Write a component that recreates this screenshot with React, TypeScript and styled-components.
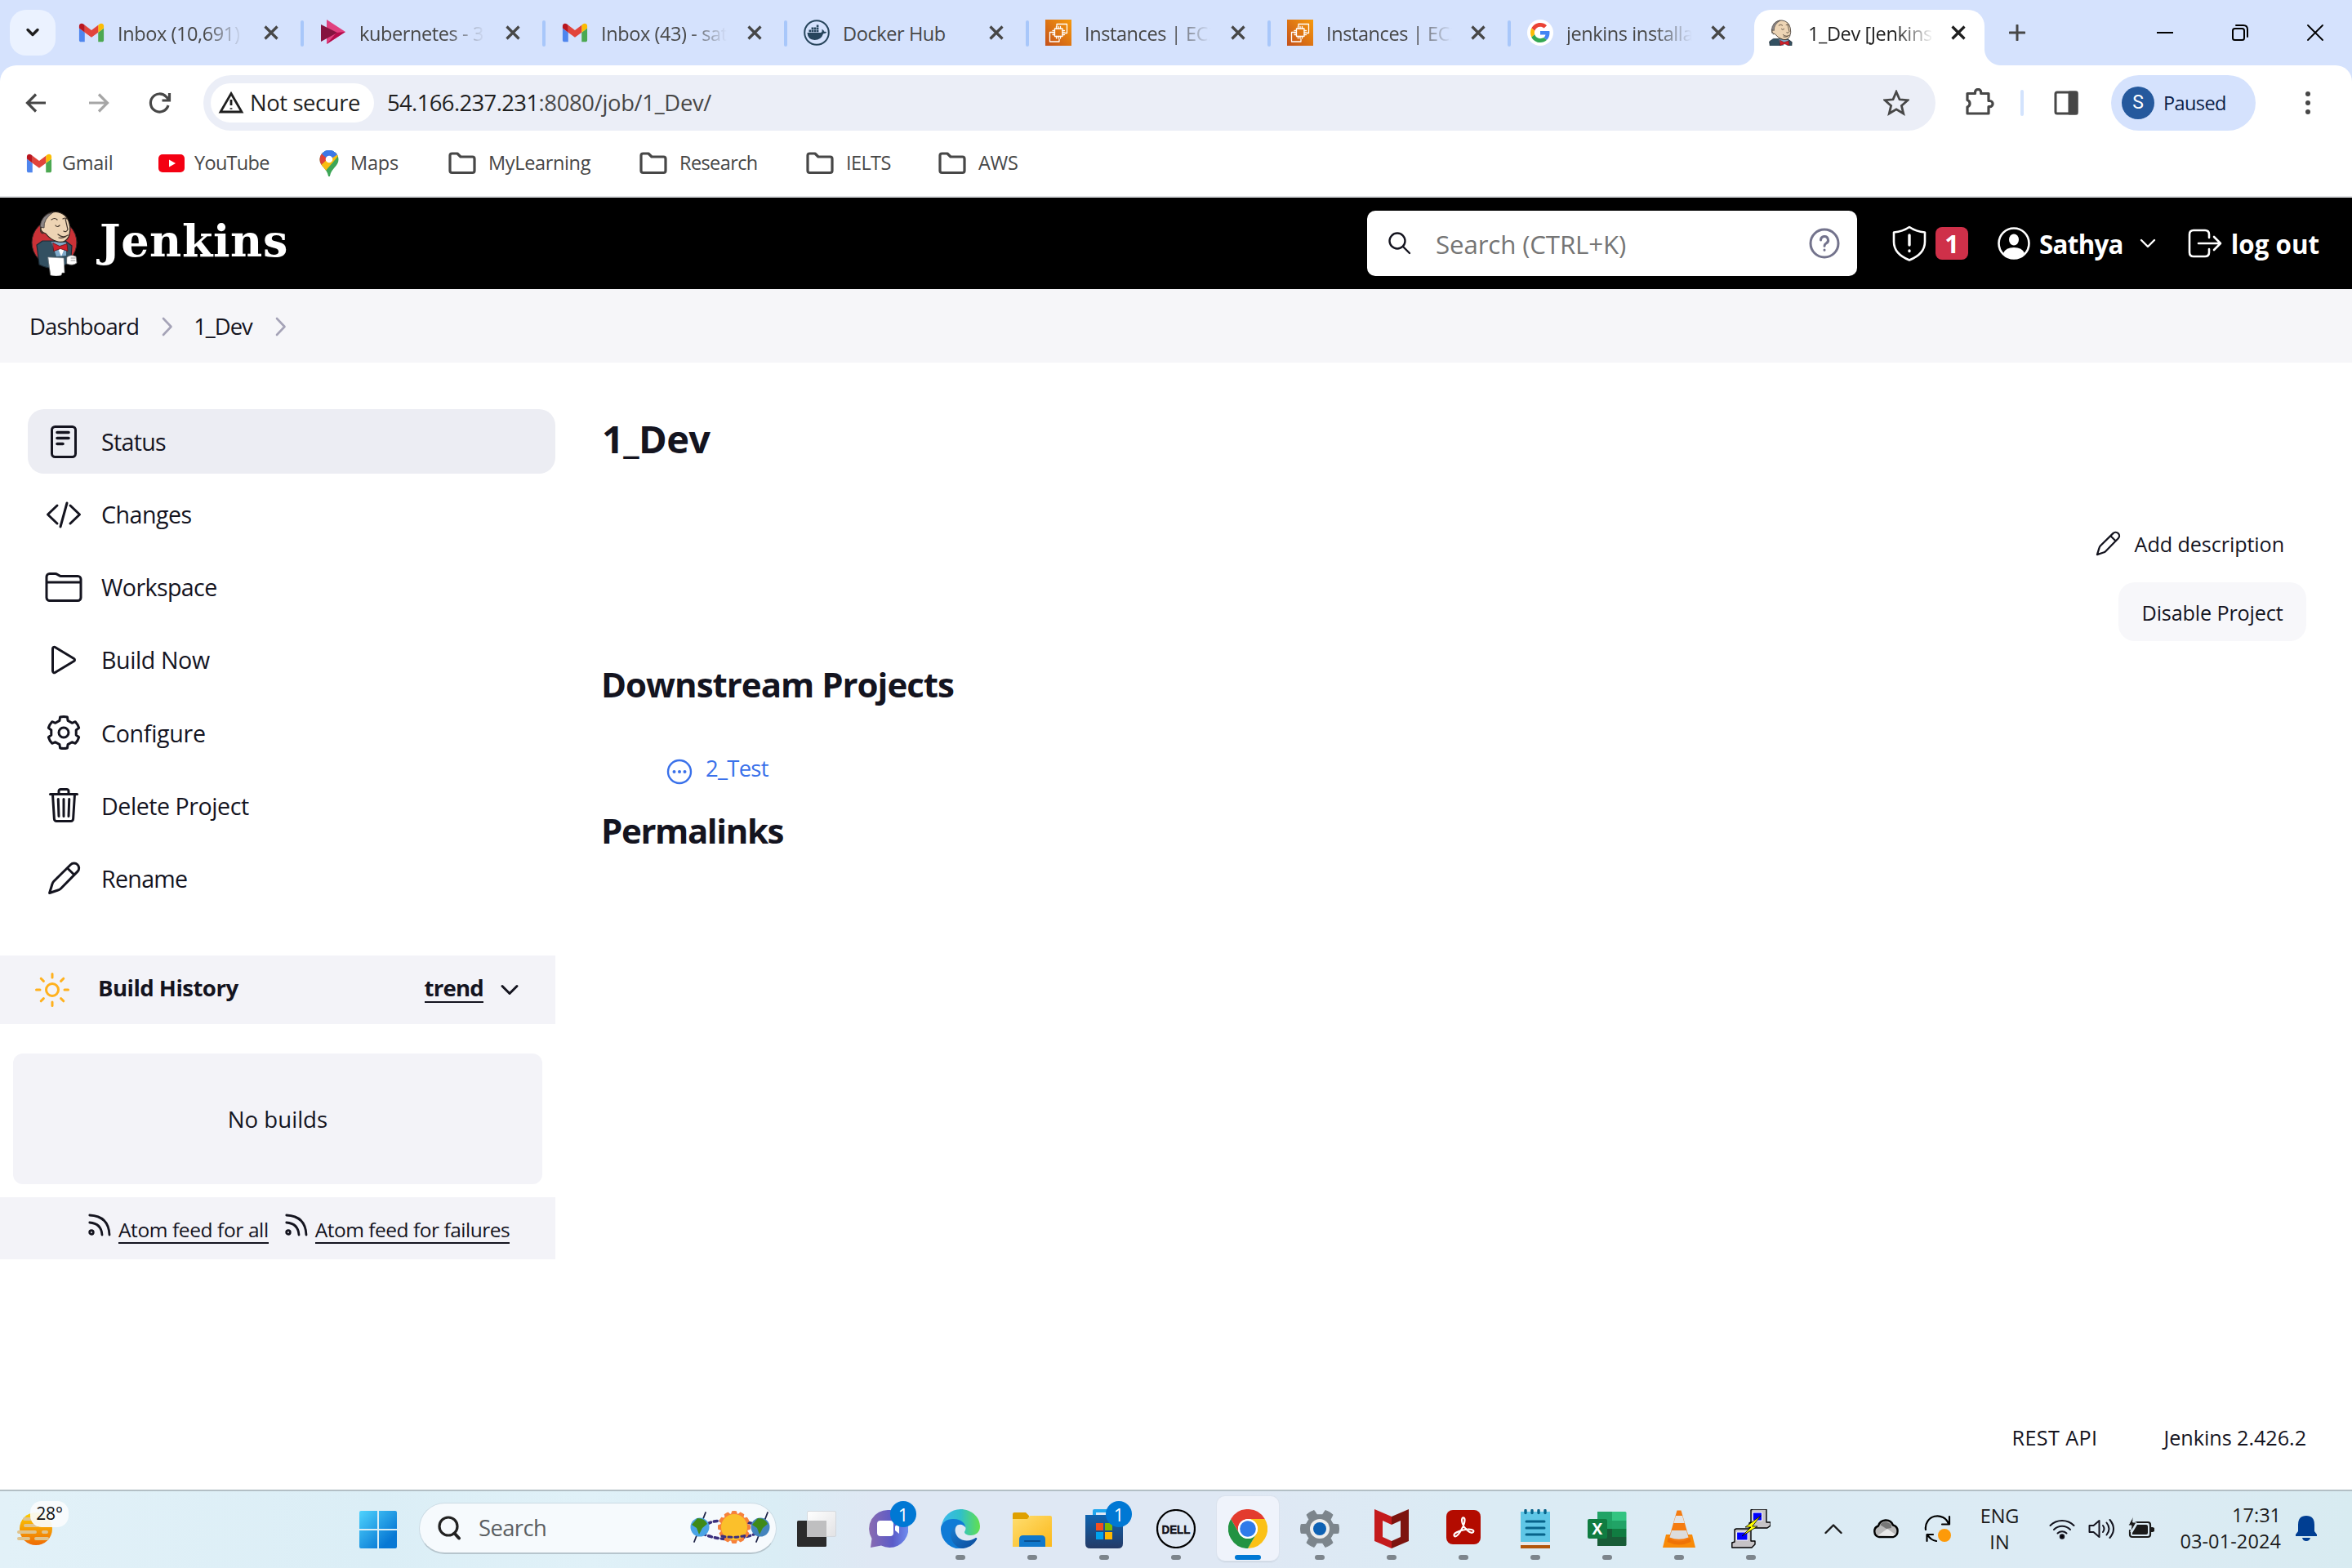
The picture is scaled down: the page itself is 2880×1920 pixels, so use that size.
import React from "react";
import styled, { createGlobalStyle } from "styled-components";
import { IoPlayOutline, IoFolderOutline, IoTrashOutline, IoSunnyOutline, IoChevronDown } from "react-icons/io5";

const Global = createGlobalStyle`
  * { box-sizing: border-box; }
  body { margin: 0; background: #fff; font-family: "Open Sans", "Noto Sans", sans-serif; color: #14141f; }
  svg { display: block; flex: none; }
`;

const T = styled.span<{ $s?: number; $w?: number; $ls?: number; $c?: string; $mt?: number }>`
  display: block;
  flex: none;
  white-space: pre;
  line-height: 1.2;
  font-size: ${p => p.$s ?? 23.5}px;
  font-weight: ${p => p.$w ?? 400};
  letter-spacing: ${p => p.$ls ?? -0.4}px;
  margin-top: ${p => p.$mt ?? 0}px;
  color: ${p => p.$c ?? "inherit"};
`;
const Screen = styled.div`width: 2880px; height: 1920px; display: flex; flex-direction: column; overflow: hidden;`;

/* ---------- browser chrome ---------- */
const TabStrip = styled.div`height: 80px; flex: none; background: #d5e2fd; display: flex; align-items: center; padding-left: 12px; color: #474747;`;
const TabSearch = styled.div`width: 56px; height: 56px; border-radius: 20px; background: #ebf2ff; display: flex; align-items: center; justify-content: center; margin-right: 6px;`;
const TabBox = styled.div<{ $w: number }>`width: ${p => p.$w}px; height: 80px; padding-left: 22px; display: flex; align-items: center; flex: none; position: relative;`;
const TabTitle = styled.div<{ $fade?: boolean; $mr?: number }>`
  width: 162px; margin-left: 16px; margin-right: ${p => p.$mr ?? 16}px; flex: none;
  ${p => p.$fade && "mask-image: linear-gradient(90deg, #000 66%, transparent 95%);"}
`;
const TabEdge = styled.div`width: 4px; height: 32px; border-radius: 2px; background: #a8c7fa; position: absolute; right: -2px; top: 25px;`;
const ActiveTab = styled(TabBox)`
  color: #1f1f1f; z-index: 1;
  &::before { content: ""; position: absolute; z-index: -1; left: 4px; width: 282px; top: 12px; bottom: 0; background: #fff; border-radius: 20px 20px 0 0; }
`;
const Foot = styled.div<{ $left?: boolean }>`
  position: absolute; width: 20px; height: 20px; bottom: 0; ${p => p.$left ? "left: -16px;" : "left: 286px;"}
  background: radial-gradient(circle at ${p => p.$left ? "0 0" : "100% 0"}, transparent 19.5px, #fff 20.5px);
`;
const NewTab = styled.div`margin-left: 20px; width: 20px;`;
const WinButtons = styled.div`display: flex; align-items: center; margin-left: 161px; gap: 72px; color: #000;`;
const ToolbarWrap = styled.div`background: #d5e2fd; flex: none;`;
const Toolbar = styled.div`height: 92px; background: #fff; border-radius: 20px 20px 0 0; display: flex; align-items: center; padding-left: 29px; color: #474747;`;
const NavIcons = styled.div`display: flex; align-items: center; gap: 43.500px; width: 220px; flex: none;`;
const Omnibox = styled.div`width: 2121px; height: 68px; border-radius: 34px; background: #ebeef7; display: flex; align-items: center; padding: 0 32px 0 9px; flex: none;`;
const Chip = styled.div`width: 200px; height: 48px; border-radius: 24px; background: #fff; display: flex; align-items: center; padding-left: 9px; gap: 7px; color: #1f1f1f; margin-right: 16px;`;
const Grow = styled.div`flex: 1;`;
const ToolSep = styled.div`width: 4px; height: 32px; border-radius: 2px; background: #d3e3fd; margin: 0 37px 0 32px;`;
const Profile = styled.div`width: 177px; height: 68px; border-radius: 34px; background: #d5e2fd; display: flex; align-items: center; padding-left: 13px; gap: 11px; margin: 0 60px 0 40px;`;
const Avatar = styled.div`width: 40px; height: 40px; border-radius: 50%; background: #25599d; display: flex; align-items: center; justify-content: center; font-family: Roboto, sans-serif;`;
const Bookmarks = styled.div`height: 70px; flex: none; display: flex; align-items: flex-start; padding: 8px 0 0 32px; color: #474747; border-bottom: 2px solid #dfe1e4;`;
const Bookmark = styled.div<{ $w: number }>`height: 40px; width: ${p => p.$w}px; display: flex; align-items: center; gap: 12px; flex: none;`;

/* ---------- Jenkins ---------- */
const Header = styled.header`height: 112px; background: #000; color: #fff; display: flex; align-items: center; padding-left: 38px; flex: none;`;
const Brand = styled(T)`font-family: "DejaVu Serif", serif; margin-left: 26px; width: 1552px;`;
const SearchBox = styled.div`width: 600px; height: 80px; border-radius: 10px; background: #fff; display: flex; align-items: center; padding: 0 21px 0 26px; flex: none;`;
const HeaderItem = styled.div<{ $ml: number; $gap?: number }>`display: flex; align-items: center; margin-left: ${p => p.$ml}px; gap: ${p => p.$gap ?? 0}px; flex: none;`;
const Alert = styled.div`width: 40px; height: 40px; border-radius: 8px; background: #cf3049; display: flex; align-items: center; justify-content: center;`;
const Crumbs = styled.nav`height: 90px; background: #f6f6f9; display: flex; align-items: center; padding: 2px 0 0 36px; flex: none;`;
const CrumbSep = styled.div`color: #a5a3b7; margin: 0 25px 0 28px;`;
const Body = styled.div`height: 1380px; flex: none; display: flex;`;
const Side = styled.aside`width: 680px; flex: none; padding-top: 57px;`;
const Task = styled.div<{ $on?: boolean }>`
  height: 79px; margin: 0 0 10.200px 34px; border-radius: 20px; padding-left: 20px; display: flex; align-items: center; gap: 22px;
  background: ${p => p.$on ? "#ecedf3" : "transparent"};
`;
const HistoryHead = styled.div`height: 84px; margin-top: 55px; background: #f3f3f8; display: flex; align-items: center; padding: 0 40px 0 40px;`;
const Underlined = styled(T)`border-bottom: 2px solid #14141f;`;
const NoBuilds = styled.div`height: 160px; margin: 36px 16px 16px; border-radius: 12px; background: #f3f3f8; display: flex; align-items: center; justify-content: center;`;
const Feeds = styled.div`height: 76px; background: #f3f3f8; display: flex; align-items: center; padding-left: 108px;`;
const FeedLink = styled.div<{ $mr: number }>`display: flex; align-items: flex-start; height: 36px; gap: 9px; margin-right: ${p => p.$mr}px;`;
const Main = styled.main`flex: 1; padding: 65px 56px 0 56px; display: flex; flex-direction: column; align-items: stretch;`;
const Actions = styled.div`display: flex; flex-direction: column; align-items: flex-end; height: 169px; margin-top: 79px;`;
const AddDesc = styled.div`display: flex; align-items: center; gap: 15px; height: 44px; margin: 0 27px 25px 0;`;
const Button = styled.div`width: 230px; height: 72px; border-radius: 20px; background: #f7f7fa; display: flex; align-items: center; justify-content: center; flex: none;`;
const Downstream = styled.div`display: flex; align-items: center; gap: 16px; padding-left: 80px; color: #3a71ea; height: 40px; margin: 61px 0 27px;`;
const PageFoot = styled.footer`margin-top: auto; height: 79px; display: flex; justify-content: flex-end; gap: 81px;`;

/* ---------- taskbar ---------- */
const Taskbar = styled.div`
  height: 96px; flex: none; border-top: 2px solid #b3bfc5; display: flex; align-items: flex-start;
  background: linear-gradient(90deg, #e2f1f8 0%, #dbeef6 16%, #e0f1f8 25%, #daedf5 33%, #dfe8f4 37%, #dfe8f4 53%, #dbebf4 62%, #dcebf4 90%, #d8ebf1 100%);
`;
const Weather = styled.div`width: 440px; padding: 26px 0 0 20px; position: relative; flex: none;`;
const Temp = styled.div`position: absolute; left: 37px; top: 12px; width: 47px; height: 32px; border-radius: 14px; background: rgba(250,252,253,.92); display: flex; align-items: center; justify-content: center;`;
const Start = styled.div`width: 46px; padding-top: 24px; margin-right: 27px; flex: none;`;
const TaskSearch = styled.div`width: 438px; height: 63px; margin-top: 14px; border-radius: 32px; background: #f6fafd; border: 1px solid #cbdbe4; border-bottom: 2px solid #b6c5cd; display: flex; align-items: center; padding: 0 6px 0 21px; flex: none; margin-right: 5px;`;
const AppSlot = styled.div<{ $on?: boolean }>`
  width: 76px; height: 79px; margin: 6px 6px 0; padding-top: 16px; border-radius: 10px; display: flex; flex-direction: column; align-items: center; gap: 8px; position: relative; flex: none;
  ${p => p.$on && "background: #eff3fb; box-shadow: 0 0 0 1px #dbe3ee, 0 2px 1px #c8d2de;"}
`;
const Dot = styled.div<{ $on?: boolean; $none?: boolean }>`width: ${p => p.$on ? 32 : 12}px; height: 6px; border-radius: 3px; background: ${p => p.$none ? "transparent" : p.$on ? "#0078d4" : "#7d858c"};`;
const Count = styled.div`position: absolute; left: 40px; top: 6px; width: 32px; height: 32px; border-radius: 50%; background: #0078d4; display: flex; align-items: center; justify-content: center;`;
const Tray = styled.div`display: flex; align-items: center; height: 92px; padding-left: 25px;`;
const TrayCell = styled.div<{ $w: number }>`width: ${p => p.$w}px; display: flex; flex-direction: column; align-items: center; flex: none; gap: 4px;`;
const Status = styled.div`display: flex; gap: 16px; margin-left: 17px; align-items: center;`;
const Clock = styled.div`width: 154px; display: flex; flex-direction: column; align-items: flex-end; gap: 4px; margin: -2px 18px 0 0;`;

/* ---------- icons ---------- */
const S = ({ w, h = w, vb, sw, children }: { w: number; h?: number; vb?: string; sw?: number; children: React.ReactNode }) => (
  <svg width={w} height={h} viewBox={vb ?? `0 0 ${w} ${h}`} fill={sw ? "none" : "currentColor"} stroke={sw ? "currentColor" : "none"} strokeWidth={sw} strokeLinecap="round" strokeLinejoin="round">{children}</svg>
);
/* outline of a cog with n teeth: R and r are the outer and inner radii, a and b the half angles of a tooth */
const gear = (n: number, c: number, R: number, r: number, a: number, b: number, off = -90) => {
  const p = (rad: number, deg: number) => `${(c + rad * Math.cos(deg * Math.PI / 180)).toFixed(2)} ${(c + rad * Math.sin(deg * Math.PI / 180)).toFixed(2)}`;
  let d = "";
  for (let i = 0; i < n; i++) {
    const t = off + i * 360 / n;
    d += `${i ? "L" : "M"}${p(r, t - b)} L${p(R, t - a)} A${R} ${R} 0 0 1 ${p(R, t + a)} L${p(r, t + b)} `;
  }
  return d + "Z";
};
const Close = () => <S w={20} vb="-2 -2 20 20"><path d="M.5 .5l15 15M15.500 .5l-15 15" stroke="currentColor" strokeWidth="3.200" strokeLinecap="butt" fill="none" /></S>;
const Gmail = () => (
  <S w={32} h={24} vb="50 40 92 70">
    <path fill="#4f86ee" d="M58 108h14V74L52 59v43c0 3.320 2.690 6 6 6" /><path fill="#4ca851" d="M120 108h14c3.320 0 6-2.690 6-6V59l-20 15" />
    <path fill="#fbbc04" d="M120 48v26l20-15v-8c0-7.420-8.470-11.650-14.400-7.200" /><path fill="#e2443b" d="M72 74V48l24 18 24-18v26L96 92" />
    <path fill="#b9161f" d="M52 51v8l20 15V48l-5.600-4.200c-5.940-4.450-14.400-.22-14.400 7.200" />
  </S>
);
const Kube = () => <S w={32}><path d="M8 0L31 15 8 30z" fill="#e0407f" /><path d="M1 6L21 16 1 27z" fill="#85143f" /><path d="M8 30L31 15 20 16z" fill="#b40d4c" /></S>;
const Docker = () => (
  <S w={32}>
    <circle cx="16" cy="16" r="14.800" fill="none" stroke="#27455c" strokeWidth="2" />
    <g fill="#27455c">
      <path d="M4.500 16H21q2.300-1 1.300-4.300 2.700 1 3 3.100 1.800-.4 3 .5-1.200 2-4.200 2Q21.500 25 13.500 25 5 24.500 4.500 16z" />
      <path d="M6.500 12.500h2.600v2.700H6.500zM9.600 12.500h2.600v2.700H9.600zM12.700 12.500h2.600v2.700h-2.600zM15.800 12.500h2.600v2.700h-2.600zM9.600 9.500h2.600v2.600H9.600zM12.700 9.500h2.600v2.600h-2.600zM15.800 9.500h2.600v2.600h-2.600zM15.800 6.500h2.600v2.600h-2.600z" />
    </g>
  </S>
);
const Ec2 = () => (
  <S w={32}>
    <defs><linearGradient id="ec2" x1="0" y1="1" x2="1" y2="0"><stop offset="0" stopColor="#c4511b" /><stop offset="1" stopColor="#f79a0c" /></linearGradient></defs>
    <rect width="32" height="32" fill="url(#ec2)" />
    <g fill="none" stroke="#fff" strokeWidth="1.300">
      <rect x="11.500" y="11" width="9.500" height="9.500" /><path d="M13.500 8.500v2.500M16 8.500v2.500M18.500 8.500v2.500M13.500 20.500v2.500M16 20.500v2.500M18.500 20.500v2.500M9 13.500h2.500M9 16h2.500M9 18.500h2.500M21 13.500h2.500M21 16h2.500M21 18.500h2.500" />
      <path d="M14 8V5.500h12.500v11h-2.500M10 15.500H5.500v11.500h11.500v-3" />
    </g>
  </S>
);
const Google = () => (
  <S w={32}><circle cx="16" cy="16" r="16" fill="#fff" />
    <g transform="translate(4 4) scale(.5)">
      <path fill="#EA4335" d="M24 9.500c3.540 0 6.710 1.220 9.210 3.600l6.850-6.850C35.900 2.380 30.470 0 24 0 14.620 0 6.510 5.380 2.560 13.220l7.980 6.190C12.430 13.720 17.740 9.500 24 9.500z" />
      <path fill="#4285F4" d="M46.980 24.550c0-1.570-.15-3.090-.38-4.550H24v9.020h12.940c-.58 2.960-2.260 5.480-4.780 7.180l7.730 6c4.510-4.180 7.090-10.360 7.090-17.650z" />
      <path fill="#FBBC05" d="M10.530 28.590c-.48-1.450-.76-2.990-.76-4.590s.27-3.140.76-4.590l-7.980-6.190C.92 16.460 0 20.120 0 24c0 3.880.92 7.540 2.560 10.780l7.970-6.190z" />
      <path fill="#34A853" d="M24 48c6.480 0 11.930-2.130 15.890-5.810l-7.730-6c-2.150 1.450-4.920 2.300-8.160 2.300-6.260 0-11.570-4.220-13.470-9.910l-7.980 6.190C6.510 42.620 14.620 48 24 48z" />
    </g>
  </S>
);
const Butler = ({ w, h, vb, red }: { w: number; h: number; vb: string; red?: boolean }) => (
  <S w={w} h={h} vb={vb}>
    {red && <ellipse cx="28.500" cy="39" rx="27.500" ry="28" fill="#cb3237" stroke="#3a2525" strokeWidth="1" />}
    <path d="M14 37L7 42 10 66Q22 72 34 70L46 64 49 57 50 43 42 37z" fill="#335061" stroke="#1c2a35" strokeWidth="1.200" />
    <path d="M25 38L31 56 43 55 43 39z" fill="#7fa9c9" /><path d="M32 44l5 12 5-12z" fill="#fff" />
    <path d="M16 8Q21 1 31 1.500 44 3 47 16 49 24 46 32 42 40 33 38 24 36 18 28 11 26 12 20z" fill="#edd4b4" stroke="#2b231d" strokeWidth="1.200" />
    <path d="M27 2Q12 5 11 20l5 1Q15 10 27 2z" fill="#8a8585" stroke="#3a3434" strokeWidth=".8" />
    <path d="M12 20q-2 7 3 8M25 11q4-3 7 0M39 10q3-2 5 0M30 18q2 3 5 0M42 10l3 13q-2 4-5 2M33 29q6 5 12 1M34 33q4 1 8-1" fill="none" stroke="#40342a" strokeWidth="1.200" />
    <path d="M27 39.500l8 4 9-3 1 9-9-3-8 3z" fill="#d0202b" stroke="#5e1014" strokeWidth=".8" />
    <path d="M21 57l19 1 1 18-3 0-1 3q-6 2-13 0z" fill="#fff" stroke="#999" strokeWidth=".6" />
    <path d="M44 57q4-4 11-1l1 8q-5 4-12 1z" fill="#fff" stroke="#777" strokeWidth=".8" /><path d="M49 58l5 0M49 61l5 0" stroke="#777" strokeWidth=".8" />
  </S>
);
const YouTube = () => <S w={32} h={22}><rect width="32" height="22" rx="5" fill="#f40012" /><path d="M13 6.500v9l8-4.500z" fill="#fff" /></S>;
const MapsPin = () => (
  <S w={26} h={32} vb="0 0 26 32">
    <defs><clipPath id="pin"><path d="M12 0a11.500 11.500 0 0 1 11.500 11.500c0 8-8.500 10-10.500 20a1 1 0 0 1-2 0C9 21.500 .5 19.500 .5 11.500A11.500 11.500 0 0 1 12 0z" /></clipPath></defs>
    <g clipPath="url(#pin)"><path d="M0 0h24v32H0z" fill="#3da657" /><path d="M0 0h24v6L12 12 4 6z" fill="#3c78e6" /><path d="M0 0l3 4 9 8-8 8-4-2z" fill="#dd4238" /><path d="M1 19L20 2l4 4-17 20z" fill="#f8bd10" /><path d="M6 0h18v4L12 12 3.500 5z" fill="#3c78e6" /><circle cx="12" cy="11" r="4.300" fill="#fff" /></g>
  </S>
);
const Folder = () => <S w={37} h={28} sw={3.2}><path d="M2 4.500Q2 2 4.500 2H11l4 4h14.500Q32 6 32 8.500V23q0 2.500-2.500 2.500h-25Q2 25.500 2 23z" /></S>;
const Pencil = ({ s }: { s: number }) => <S w={s} vb="0 0 48 48" sw={3}><path d="M6.600 41.500L10 30.500Q10.500 28.500 12 27L32.500 6.800a5.700 5.700 0 0 1 8.500 8.300L20.500 36Q19 37.500 17 38zM28.500 11l8.500 8.300" /></S>;
const Rss = () => <S w={28} h={28} sw={2.8}><path d="M1.800 2Q25 3 26 26M1.800 11Q16 12 17 26" /><circle cx="4" cy="23" r="2.300" /></S>;
const Chevron = () => <S w={14} h={24} sw={2.6}><path d="M2 2l9.500 10L2 22" /></S>;

const Teams = () => <S w={48}><defs><linearGradient id="tm" x1="0" x2="1"><stop offset="0" stopColor="#8a6bb0" /><stop offset=".6" stopColor="#5b5bc8" /><stop offset="1" stopColor="#6f8df0" /></linearGradient></defs>
  <path d="M24 1a23 23 0 1 1-9 43.500L2 47 3.500 36A23 23 0 0 1 24 1z" fill="url(#tm)" /><rect x="10" y="14" width="20" height="19" rx="4" fill="#fff" /><path d="M32 21l5-4v13l-5-4z" fill="#fff" /></S>;
const Edge = () => <S w={48}><defs><linearGradient id="e1" x1="0" y1=".4" x2="1" y2=".4"><stop offset="0" stopColor="#3cb9ee" /><stop offset=".5" stopColor="#30c0c8" /><stop offset="1" stopColor="#62e04e" /></linearGradient><linearGradient id="e2" x1="0" y1="0" x2="1" y2="1"><stop offset="0" stopColor="#1a7fd2" /><stop offset="1" stopColor="#0c4a9a" /></linearGradient></defs>
  <path d="M1 20A23.500 23.500 0 0 1 24 0c14 0 24 10 24 21 0 7-5 11-11 11-5 0-8-2-8-4 0-1 1.500-2 1.500-5 0-3-4-9-12-10C10 12 2 16 1 20z" fill="url(#e1)" />
  <path d="M0 24C0 16 8 11.500 16 12c9 .5 14 5 14.500 11-2-4-8-6-12-2-6 7-1 22 11 27A24 24 0 0 1 0 24z" fill="#0f7bd6" />
  <path d="M20 19.500c-5 5-2 15 6 18 7 2.500 13 0 16-2 1.500-1 3 0 2 1.500C40 44 33 48 26 48 14 46 10 32 13 26c2-4 5-6 7-6.500z" fill="url(#e2)" /></S>;
const Explorer = () => <S w={48}><defs><linearGradient id="fx" x1="0" y1="0" x2="1" y2="1"><stop offset="0" stopColor="#ffde70" /><stop offset="1" stopColor="#fbb81a" /></linearGradient></defs>
  <path d="M0 6q0-2 2-2h14l4 4v6H0z" fill="#dfa000" /><path d="M0 12l18 0 3-4h25q2 0 2 2v36H0z" fill="url(#fx)" /><path d="M8 46V37q0-5 5-5h22q5 0 5 5v9z" fill="#0f78cc" /><path d="M15 39h18" stroke="#064f92" strokeWidth="2.200" /></S>;
const Store = () => <S w={48}><defs><linearGradient id="st" x1="0" y1="0" x2="0" y2="1"><stop offset="0" stopColor="#0f64b0" /><stop offset="1" stopColor="#243a66" /></linearGradient></defs>
  <path d="M12 11V2h24v9" fill="none" stroke="#1fa6ee" strokeWidth="4" /><path d="M1 7h46v35q0 6-6 6H7q-6 0-6-6z" fill="url(#st)" />
  <path d="M14 17h9v9h-9z" fill="#f2501f" /><path d="M25 17h9v9h-9z" fill="#7fb900" /><path d="M14 28h9v9h-9z" fill="#00a3ee" /><path d="M25 28h9v9h-9z" fill="#feb800" /></S>;
const Dell = () => <S w={48}><circle cx="24" cy="24" r="23" fill="none" stroke="#000" strokeWidth="2.200" /><text x="6.500" y="29.500" fontFamily="Liberation Sans, sans-serif" fontWeight="700" fontSize="14.500" textLength="35" lengthAdjust="spacingAndGlyphs" stroke="#000" strokeWidth=".4">DELL</text></S>;
const Chrome = () => <S w={48}><path d="M3.200 12A24 24 0 0 1 44.800 12L24 12A12 12 0 0 0 13.600 30z" fill="#e33b2e" /><path d="M44.800 12A24 24 0 0 1 24 48L34.400 30A12 12 0 0 0 24 12z" fill="#fbc116" /><path d="M24 48A24 24 0 0 1 3.200 12L13.600 30A12 12 0 0 0 34.400 30z" fill="#229342" /><circle cx="24" cy="24" r="12" fill="#fff" /><circle cx="24" cy="24" r="9.800" fill="#2f7bea" /></S>;
const SettingsApp = () => <S w={48}><path d={gear(6, 24, 23.5, 17.5, 13, 19, 0)} fill="#7c858c" stroke="#7c858c" strokeLinejoin="round" /><circle cx="24" cy="24" r="12" fill="#eee" /><circle cx="24" cy="24" r="8" fill="#0f62b4" /></S>;
const McAfee = () => <S w={48}><path d="M3 0l21 9v10l-11-5v20l11 5v9L3 39z" fill="#c41a1c" /><path d="M45 0L24 9v10l11-5v20l-11 5v9l21-9z" fill="#7d140f" /></S>;
const Acrobat = () => <S w={48}><rect x="3" y="1" width="42" height="42" rx="8" fill="#b30b00" /><path d="M13 33c-3-3 6-7 13-8 6-1 12 0 10 3-3 3-13-5-14-14 0-5 4-5 3.500 0C25 21 16 36 13 33z" fill="none" stroke="#fff" strokeWidth="2.200" /></S>;
const Notepad = () => <S w={48}><path d="M6 3h36v37H6z" fill="#5fc6e6" /><path d="M6 40h36v4H6z" fill="#e8e8e8" /><path d="M6 44h36v4H6z" fill="#b2570c" /><path d="M13 15h22M13 23h22M13 31h22" stroke="#07638a" strokeWidth="3" strokeLinecap="round" /><path d="M12 1.500v3M20 1.500v3M28 1.500v3M36 1.500v3" stroke="#07638a" strokeWidth="3.400" strokeLinecap="round" /></S>;
const Excel = () => <S w={48}><path d="M12 3h18v11H12z" fill="#21a366" /><path d="M30 3h16q1.500 0 1.500 1.500V14H30z" fill="#33c481" /><path d="M12 14h18v10H12z" fill="#1fa062" /><path d="M30 14h17.500v10H30z" fill="#21a366" /><path d="M12 24h18v10H12z" fill="#185c37" /><path d="M30 24h17.500v10H30z" fill="#107c41" /><path d="M12 34h35.500v9.500q0 1.500-1.500 1.500H12z" fill="#185c37" /><rect x="0" y="12" width="24" height="24" rx="2" fill="#107c41" /><text x="5.500" y="31" fontFamily="Open Sans, sans-serif" fontWeight="700" fontSize="19" fill="#fff">X</text></S>;
const Vlc = () => <S w={48}><path d="M8 31h32l4 16H4z" fill="#f88a08" /><path d="M21.500 1.500h5L37 38q-13 6-26 0z" fill="#f57c10" /><path d="M20 8h8l2.700 9H17.300z" fill="#e4e4e4" /><path d="M15 26h18l2.500 8.500q-12 4.500-23 0z" fill="#dcdcdc" /><path d="M10.500 35Q24 44 37.500 35l1 5Q24 47 9.500 40z" fill="#ee7206" /></S>;
const Putty = () => <S w={48}><g fill="#c6c3c6" stroke="#000" strokeWidth="1.400"><path d="M24 1l2-1h17v16l5 0v4l-4 3H22v-6l2-1z" /><path d="M4 25l2-1h18v15l5 0v4l-4 4H.8v-6l3.200-1z" /></g><path d="M26.500 4h11v10h-11zM7 28h13v10H7z" fill="#00f" stroke="#fff" /><path d="M36 8L17 22h7L13 33l19-12h-6z" fill="#ff0" stroke="#000" strokeWidth=".8" /></S>;
const TaskView = () => <S w={48}><defs><linearGradient id="tv" x1="0" y1="0" x2="1" y2="1"><stop offset="0" stopColor="#fff" /><stop offset="1" stopColor="#e2e2e4" /></linearGradient></defs><rect y="14" width="36" height="32" rx="1.500" fill="#2b2b2b" /><rect x="12.500" y="2.500" width="35" height="31" rx="1.500" fill="url(#tv)" stroke="#cfd3d8" strokeWidth=".8" /><path d="M12 14h24v20H12z" fill="#bfbfc0" /></S>;

const apps: { i: React.ReactNode; n?: boolean; on?: boolean; none?: boolean }[] = [
  { i: <TaskView />, none: true }, { i: <Teams />, n: true, none: true }, { i: <Edge /> }, { i: <Explorer /> }, { i: <Store />, n: true }, { i: <Dell /> }, { i: <Chrome />, on: true },
  { i: <SettingsApp /> }, { i: <McAfee /> }, { i: <Acrobat /> }, { i: <Notepad /> }, { i: <Excel /> }, { i: <Vlc /> }, { i: <Putty /> },
];
const tabs: [React.ReactNode, string, number, boolean][] = [
  [<Gmail />, "Inbox (10,691)", 296, true], [<Kube />, "kubernetes - 3", 296, true], [<Gmail />, "Inbox (43) - sat", 296, true], [<Docker />, "Docker Hub", 296, false],
  [<Ec2 />, "Instances | EC2", 296, true], [<Ec2 />, "Instances | EC2", 294, true], [<Google />, "jenkins installa", 296, true],
];
const bookmarks: [React.ReactNode, string, number, number][] = [
  [<Gmail />, "Gmail", 162, -0.3], [<YouTube />, "YouTube", 197, -0.7], [<MapsPin />, "Maps", 158, -0.2], [<Folder />, "MyLearning", 234, -0.35], [<Folder />, "Research", 204, -0.6], [<Folder />, "IELTS", 162, -0.6], [<Folder />, "AWS", 120, -0.3],
];
const tasks: [React.ReactNode, string, number][] = [
  [<S w={48} sw={3}><rect x="9.500" y="5.500" width="29" height="37" rx="4" /><path d="M16 12.500h14M16 19.500h14M16 26.500h7" strokeWidth="3.600" /></S>, "Status", -0.7],
  [<S w={48} sw={3}><path d="M16 13L4.500 24 16 35M32 13l11.500 11L32 35M28 10l-8 29" /></S>, "Changes", -0.5],
  [<IoFolderOutline size={48} />, "Workspace", -0.6], [<IoPlayOutline size={48} />, "Build Now", -0.4],
  [<S w={48} sw={3}><path d={gear(6, 24, 19.5, 15.5, 13, 19)} /><circle cx="24" cy="24" r="6" /></S>, "Configure", -0.3],
  [<IoTrashOutline size={48} />, "Delete Project", -0.45], [<Pencil s={48} />, "Rename", -0.7],
];

export default function App() {
  return (
    <Screen>
      <Global />
      <TabStrip>
        <TabSearch><S w={18} h={12} sw={3.4}><path d="M3 2.500l6 6 6-6" stroke="#1f1f1f" /></S></TabSearch>
        {tabs.map(([ic, t, w, fade], i) => <TabBox key={i} $w={w}>{ic}<TabTitle $fade={fade} $mr={i > 4 ? 14 : 16}><T $mt={2}>{t}</T></TabTitle><Close />{i < 6 && <TabEdge />}</TabBox>)}
        <ActiveTab $w={296}><Foot $left /><Foot /><Butler w={32} h={32} vb="6 0 50 50" /><TabTitle $fade $mr={12}><T $mt={2}>1_Dev [Jenkins</T></TabTitle><Close /></ActiveTab>
        <NewTab><S w={20} sw={3}><path d="M10 1v18M1 10h18" /></S></NewTab>
        <WinButtons>
          <S w={20}><path d="M0 9h20v2H0z" /></S>
          <S w={20} sw={2}><rect x="1" y="5" width="14" height="14" rx="2.500" /><path d="M5 1h9q5 0 5 5v9" /></S>
          <S w={20} sw={1.8}><path d="M1 1l18 18M19 1L1 19" /></S>
        </WinButtons>
      </TabStrip>
      <ToolbarWrap>
        <Toolbar>
          <NavIcons>
            <S w={32} sw={3.2}><path d="M27 16H5M15 5.500L4.500 16 15 26.500" strokeLinecap="butt" strokeLinejoin="miter" /></S>
            <S w={32} sw={3.2}><path d="M4 16h22M16 5.500L26.500 16 16 26.500" stroke="#a6a6a6" strokeLinecap="butt" strokeLinejoin="miter" /></S>
            <S w={32} sw={3.2}><path d="M26 19a11 11 0 1 1-2.500-10.500L27 12M27.500 4v9h-9" strokeLinecap="butt" strokeLinejoin="miter" /></S>
          </NavIcons>
          <Omnibox>
            <Chip><S w={32} sw={2.8}><path d="M16 4.500L29 27H3z" strokeLinejoin="miter" /><path d="M16 12v7M16 22.200v1.500" strokeLinecap="butt" /></S><T $s={27.4}>Not secure</T></Chip>
            <T $s={27.4} $c="#1f1f1f" $ls={-0.6}>54.166.237.231</T><T $s={27.4} $ls={-0.32}>:8080/job/1_Dev/</T>
            <Grow />
            <S w={32} sw={2.8}><path d="M16 2.500l4 9.300 10 .9-7.600 6.700L24.700 29 16 23.800 7.300 29l2.300-9.600L2 12.700l10-.9z" strokeLinejoin="miter" /></S>
          </Omnibox>
          <HeaderItem $ml={36}>
            <S w={36} sw={3.2}><path d="M3 8.500h9.500V7a3.600 3.600 0 0 1 7.200 0v1.500H29v9h1.500a3.600 3.600 0 0 1 0 7.200H29V33H3v-8a4.500 4.500 0 0 0 0-8.500z" transform="translate(0 -2)" /></S>
            <ToolSep />
            <S w={30} sw={3}><rect x="2" y="2" width="26" height="26" rx="2" /><path d="M19 2h9v26h-9z" fill="currentColor" /></S>
            <Profile><Avatar><T $s={23} $c="#fff">S</T></Avatar><T $c="#0a1d48" $ls={-0.6}>Paused</T></Profile>
            <S w={8} h={28}><circle cx="4" cy="3" r="3" /><circle cx="4" cy="14" r="3" /><circle cx="4" cy="25" r="3" /></S>
          </HeaderItem>
        </Toolbar>
      </ToolbarWrap>
      <Bookmarks>{bookmarks.map(([ic, t, w, ls]) => <Bookmark key={t} $w={w}>{ic}<T $ls={ls} $mt={-1}>{t}</T></Bookmark>)}</Bookmarks>

      <Header>
        <Butler w={58} h={80} vb="0 0 58 80" red />
        <Brand $s={54} $w={700} $ls={0.6} $mt={-6}>Jenkins</Brand>
        <SearchBox>
          <S w={28} sw={2.4}><circle cx="11" cy="11" r="9.500" stroke="#14141f" /><path d="M18 18l8 8" stroke="#14141f" /></S>
          <HeaderItem $ml={30}><T $s={31.3} $c="#757575" $ls={-0.15} $mt={3}>Search (CTRL+K)</T></HeaderItem><Grow />
          <S w={38} sw={3}><circle cx="19" cy="19" r="17" stroke="#73738c" /><path d="M14.500 15a4.500 4.500 0 1 1 6.500 4q-2 1.200-2 3.300M19 27v.2" stroke="#73738c" /></S>
        </SearchBox>
        <HeaderItem $ml={43} $gap={11}>
          <S w={42} h={44} sw={2.6}><path d="M21 2Q29 7.500 40 8.500V20Q40 35 21 42.500 2 35 2 20V8.500Q13 7.500 21 2z" /><path d="M21 12v12M21 31v.5" strokeWidth="3.400" /></S>
          <Alert><T $s={31} $w={700} $mt={2}>1</T></Alert>
        </HeaderItem>
        <HeaderItem $ml={36} $gap={11}>
          <S w={40} sw={2.6}><circle cx="20" cy="20" r="18.500" /><ellipse cx="20" cy="15.500" rx="6" ry="7" fill="#fff" stroke="none" /><path d="M7 32q3-7 13-7t13 7q-5 7-13 7T7 32z" fill="#fff" stroke="none" /></S>
          <T $s={31.3} $w={700} $ls={-0.7} $mt={3}>Sathya</T>
        </HeaderItem>
        <HeaderItem $ml={20}><S w={20} h={12} sw={2.4}><path d="M2 2l8 8 8-8" /></S></HeaderItem>
        <HeaderItem $ml={39} $gap={11}>
          <S w={42} h={36} sw={2.6}><path d="M26 11V7q0-5-5-5H7Q2 2 2 7v22q0 5 5 5h14q5 0 5-5v-4M13 18h26M32 10l8 8-8 8" /></S>
          <T $s={31.3} $w={700} $ls={0} $mt={3}>log out</T>
        </HeaderItem>
      </Header>
      <Crumbs>
        <T $s={27.4} $w={500} $ls={-0.8}>Dashboard</T><CrumbSep><Chevron /></CrumbSep>
        <T $s={27.4} $w={500} $ls={-1}>1_Dev</T><CrumbSep><Chevron /></CrumbSep>
      </Crumbs>
      <Body>
        <Side>
          {tasks.map(([ic, t, ls], i) => <Task key={t} $on={i === 0}>{ic}<T $s={28.6} $w={500} $ls={ls} $mt={1}>{t}</T></Task>)}
          <HistoryHead>
            <IoSunnyOutline size={48} color="#ffb11e" /><HeaderItem $ml={32}><T $s={27.6} $w={700} $ls={-0.55} $mt={-5}>Build History</T></HeaderItem><Grow />
            <Underlined $s={27.6} $w={700} $ls={-0.8} $mt={-3}>trend</Underlined><HeaderItem $ml={16}><IoChevronDown size={32} /></HeaderItem>
          </HistoryHead>
          <NoBuilds><T $s={27.6} $ls={0} $mt={1}>No builds</T></NoBuilds>
          <Feeds>
            <FeedLink $mr={20}><Rss /><Underlined $s={24.5} $ls={-0.4} $mt={5}>Atom feed for all</Underlined></FeedLink>
            <FeedLink $mr={0}><Rss /><Underlined $s={24.5} $ls={-0.48} $mt={5}>Atom feed for failures</Underlined></FeedLink>
          </Feeds>
        </Side>
        <Main>
          <HeaderItem $ml={1}><T $s={47} $w={700} $ls={-0.6}>1_Dev</T></HeaderItem>
          <Actions><AddDesc><Pencil s={36} /><T $s={25.2} $w={500} $ls={-0.1}>Add description</T></AddDesc><Button><T $s={25.2} $w={500} $ls={-0.15} $mt={2}>Disable Project</T></Button></Actions>
          <T $s={42} $w={700} $ls={-1}>Downstream Projects</T>
          <Downstream><S w={32} sw={2.4}><circle cx="16" cy="16" r="14" /><g fill="currentColor" stroke="none"><circle cx="9.500" cy="16" r="2" /><circle cx="16" cy="16" r="2" /><circle cx="22.500" cy="16" r="2" /></g></S><T $s={27.4} $w={500} $ls={-0.7} $mt={-7}>2_Test</T></Downstream>
          <T $s={42} $w={700} $ls={-1.4}>Permalinks</T>
          <PageFoot><T $s={25.2} $w={500} $ls={0.4}>REST API</T><T $s={25.2} $w={500} $ls={-0.05}>Jenkins 2.426.2</T></PageFoot>
        </Main>
      </Body>

      <Taskbar>
        <Weather>
          <S w={46} h={42}><defs><linearGradient id="sun" x1="0" y1="0" x2="0" y2="1"><stop offset="0" stopColor="#fcd003" /><stop offset="1" stopColor="#ef6c05" /></linearGradient></defs><circle cx="24" cy="20" r="20" fill="url(#sun)" /><path d="M10 8h8M11 16h14M3 24h20M33 24h4M3 32h12M24 32h14" stroke="#e0c48d" strokeWidth="4" strokeLinecap="round" /></S>
          <Temp><T $s={21} $c="#111" $ls={-0.2}>28°</T></Temp>
        </Weather>
        <Start><S w={46}><defs><linearGradient id="win" x1="0" y1="0" x2="1" y2="1" gradientUnits="userSpaceOnUse" gradientTransform="scale(46)"><stop offset="0" stopColor="#4fd3fd" /><stop offset=".8" stopColor="#0778d4" /></linearGradient></defs><g fill="url(#win)"><path d="M2 0h20v22H0V2q0-2 2-2zM24 0h20q2 0 2 2v20H24zM0 24h22v22H2q-2 0-2-2zM24 24h22v20q0 2-2 2H24z" /></g></S></Start>
        <TaskSearch>
          <S w={30} sw={3.2}><circle cx="14" cy="13" r="11" stroke="#222" /><path d="M21.500 21.500L27 27.500" stroke="#222" strokeWidth="4" /></S>
          <HeaderItem $ml={21}><T $s={27.4} $c="#5b5f63" $ls={-0.6} $mt={1}>Search</T></HeaderItem><Grow />
          <S w={100} h={42}>
            <path d="M16 20Q28 10 46 13M16 28Q50 42 86 26M64 14Q80 14 86 20" fill="none" stroke="#3b2f7d" strokeWidth="3.500" strokeDasharray="4 4" />
            <path d="M20 2L6 38M96 2L82 38" stroke="#1d2247" strokeWidth="1.800" />
            {[13, 87].map(x => <g key={x}><circle cx={x} cy="20" r="11.500" fill={x > 50 ? "#4384bd" : "#4aa3e6"} /><path d={`M${x - 3} 9q9 0 12 7l-6 5-4 8-3-8-6-4z`} fill="#3f8a18" /></g>)}
            <g transform="translate(35 0)"><path d={gear(12, 20, 20, 17, 8, 13)} fill="#f6813a" /></g><circle cx="55" cy="20" r="16" fill="#fbc02b" />
            <path d="M40 31q15 3 30 -1" fill="none" stroke="#3b2f7d" strokeWidth="3" strokeDasharray="4 4" />
          </S>
        </TaskSearch>
        {apps.map((a, i) => <AppSlot key={i} $on={a.on}>{a.i}<Dot $on={a.on} $none={a.none} />{a.n && <Count><T $s={22} $c="#fff" $ls={0}>1</T></Count>}</AppSlot>)}
        <Tray>
          <TrayCell $w={64}><S w={22} h={14} sw={2.4}><path d="M1.500 12L11 2.500 20.500 12" stroke="#1a1a1a" /></S></TrayCell>
          <TrayCell $w={64}><S w={34} h={26}><path d="M9 23a7 7 0 0 1-1-13.500A9.500 9.500 0 0 1 26 8.500 7.500 7.500 0 0 1 26 23z" fill="#b9b9b9" stroke="#000" strokeWidth="2.400" /><path d="M7 21.500L19 13l10 7-3 2z" fill="#e8e8e8" /><path d="M10 8q6-7 14 0l0 4-6 1z" fill="#777" /></S></TrayCell>
          <TrayCell $w={64}><S w={34}><g fill="none" stroke="#000" strokeWidth="2.200"><path d="M2 18A14.500 14.500 0 0 1 30 11M31 2v9.500h-9M3.500 32v-8H11M4 24q4 7 11 8" /></g><circle cx="25" cy="25" r="8" fill="#fd9a09" /></S></TrayCell>
          <TrayCell $w={87}><T $c="#1a1a1a" $ls={-0.1} $mt={0}>ENG</T><T $c="#1a1a1a" $ls={0}>IN</T></TrayCell>
          <Status>
            <S w={32} h={26} sw={2}><path d="M1.500 9a20.500 20.500 0 0 1 29 0M6 14a14 14 0 0 1 20 0M10.500 18.500a8 8 0 0 1 11 0" /><circle cx="16" cy="22.500" r="2.200" fill="#000" /></S>
            <S w={32} h={26} sw={2}><path d="M1.500 9v8h5l7 6V3l-7 6zM18 9q3 4 0 8M22.500 5.500q6 7.500 0 15M26.500 2q9 11 0 22" /></S>
            <S w={34} h={30} vb="0 0 34 30"><path d="M10 7H25q3 0 3 3v12q0 3-3 3H6q-3 0-3-3v-5" fill="none" stroke="#1a1a1a" strokeWidth="2.200" /><path d="M12 10h11q2 0 2 2v8q0 2-2 2H6v-2zM29 13h2l2 1v4l-2 1h-2z" fill="#1a1a1a" /><path d="M7 0L1 11h4l-1 8 7-12H7z" fill="#1a1a1a" stroke="#dcebf4" strokeWidth="1" /></S>
          </Status>
          <Clock><T $c="#1a1a1a" $ls={0}>17:31</T><T $c="#1a1a1a" $ls={0.1}>03-01-2024</T></Clock>
          <S w={26} h={32}><path d="M13 0q10 0 10 11v8l3 4v2H0v-2l3-4v-8Q3 0 13 0zM8 27h10q-1 4-5 4t-5-4z" fill="#003e92" /></S>
        </Tray>
      </Taskbar>
    </Screen>
  );
}
